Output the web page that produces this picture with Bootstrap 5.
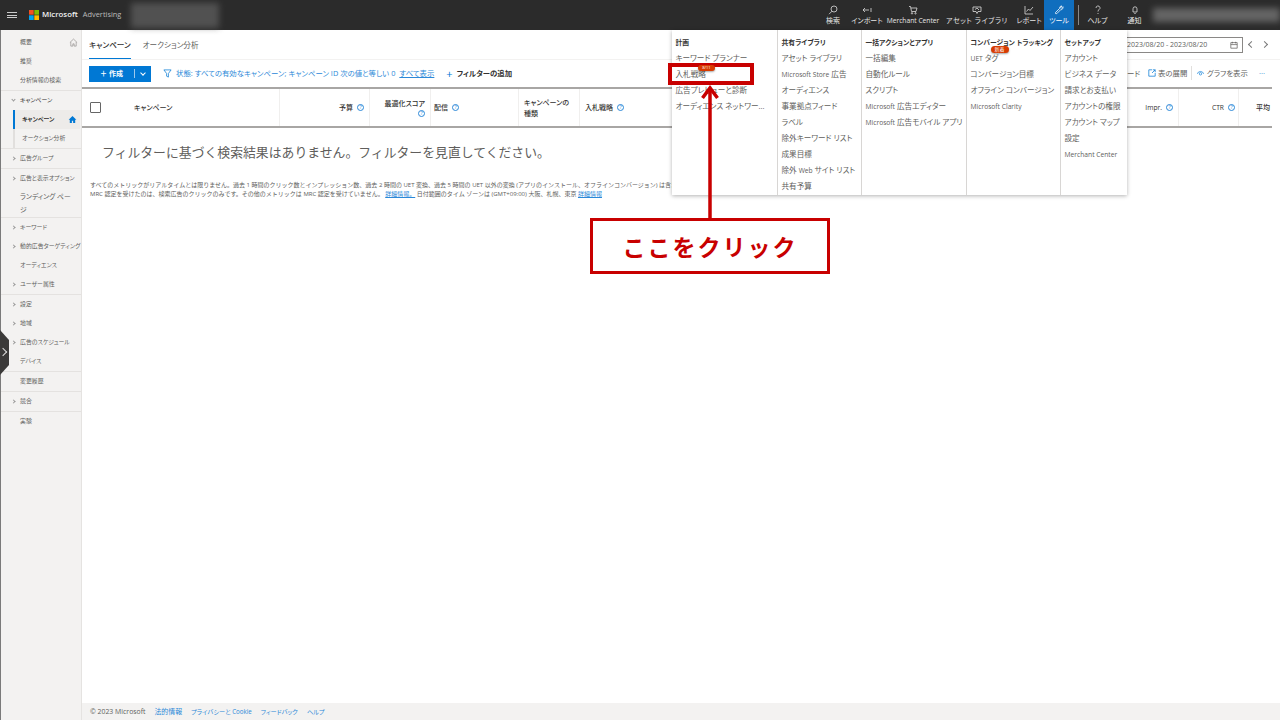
<!DOCTYPE html>
<html lang="ja">
<head>
<meta charset="UTF-8">
<title>Microsoft Advertising</title>
<link href="https://cdn.jsdelivr.net/npm/bootstrap@5.3.0/dist/css/bootstrap.min.css" rel="stylesheet">
<style>
body { font-family: "Open Sans", "Noto Sans CJK JP", sans-serif; font-feature-settings: "palt"; font-size: 7px; color: #605e5c; height: 720px; width: 1280px; overflow: hidden; background: #fff; position: relative; }
a { color: #0078d4; }

.topbar { height: 30px; background: #2b2b2b; color: #e6e6e6; flex: none; }
.burger { width: 10px; margin: 0 12px 0 7px; border-top: 1px solid #ccc; border-bottom: 1px solid #ccc; height: 6px; position: relative; }
.burger::after { content: ""; position: absolute; left: 0; right: 0; top: 1.5px; border-top: 1px solid #ccc; }
.ms-word { font-size: 7.8px; font-weight: 600; color: #f2f2f2; margin-left: 3px; }
.ad-word { font-size: 7.4px; color: #bbb; margin-left: 5px; }
.blur-a { width: 88px; height: 25px; margin-left: 10px; background: #666; filter: blur(3px); opacity: .65; }
.blur-b { width: 127px; height: 14px; background: #8a8a8a; filter: blur(3px); opacity: .6; }
.tnav { height: 30px; display: flex; flex-direction: column; align-items: center; justify-content: flex-end; padding-bottom: 5px; font-size: 7px; white-space: nowrap; color: #e6e6e6; line-height: 9px; }
.tnav svg { margin-bottom: 1px; }
.tnav.now { background: #106ebe; color: #fff; }
.tsep { width: 1px; height: 20px; background: #888; margin: 0 0 0 4px; }

.sidebar { width: 82px; flex: none; background: #f3f2f1; border-left: 1px solid #7a7a7a; border-right: 1px solid #e5e3e1; padding-top: 2.5px; overflow: hidden; }
.sgroup { border-bottom: 1px solid #e4e2e0; }
.sgroup:last-child { border-bottom: 0; }
.sitem { height: 19.05px; line-height: 19px; padding-left: 19px; font-size: 5.9px; white-space: nowrap; position: relative; color: #605e5c; }
.sitem.tall { height: 29px; line-height: 13px; padding-top: 2px; padding-right: 3px; font-size: 6.8px; }
.sitem.par::before { content: ""; position: absolute; left: 11px; top: 8px; width: 3px; height: 3px; border-top: .6px solid #999; border-right: .6px solid #999; transform: rotate(45deg); }
.sitem.open::before { transform: rotate(135deg); top: 7px; }
.sitem.dark { color: #323130; }
.sitem.sub { margin-left: 12px; padding-left: 7px; border-left: 2px solid #e1dfdd; }
.sitem.cur { background: #edebe9; border-left-color: #0078d4; color: #323130; font-weight: 700; margin-right: 1px; }
.sitem svg { position: absolute; right: 3px; top: 5px; }
.flyhandle { position: absolute; left: 0; top: 330px; width: 9px; height: 45px; background: #3b3a39; clip-path: polygon(0 0, 100% 22%, 100% 78%, 0 100%); }
.flyhandle::after { content: ""; position: absolute; left: 0; top: 19px; width: 6px; height: 6px; border-top: 1px solid #ddd; border-right: 1px solid #ddd; transform: rotate(45deg); }

.tabrow { height: 30px; padding-left: 7px; border-bottom: 1px solid #f3f2f1; flex: none; }
.tabitem { font-size: 7.6px; margin-right: 12px; height: 29px; line-height: 30px; white-space: nowrap; }
.tabitem.on { color: #323130; font-weight: 500; border-bottom: 1.5px solid #0078d4; }
.datebox { position: absolute; left: 1100px; top: 37px; width: 143px; height: 16px; border: 1px solid #8a8886; line-height: 14px; padding-left: 26px; font-size: 7px; color: #605e5c; }
.navarrow { position: absolute; top: 42px; width: 5px; height: 5px; border-top: 1px solid #777; border-right: 1px solid #777; }

.toolrow { height: 27px; padding-left: 7px; flex: none; color: #2b88d8; font-size: 7.4px; white-space: nowrap; }
.makebtn { width: 62px; height: 16px; background: #0078d4; color: #fff; font-size: 7px; font-weight: 700; border: 0; border-radius: 0; padding: 0; display: flex; align-items: center; }
.makebtn .mlabel { width: 46px; text-align: center; border-right: 1px solid #9cc9ec; line-height: 9px; }
.makebtn .mcaret { width: 4px; height: 4px; border-right: 1px solid #fff; border-bottom: 1px solid #fff; transform: rotate(45deg); margin: -2px 0 0 6px; }
.rightlinks { position: absolute; left: 1127px; top: 66px; width: 145px; height: 14px; font-size: 7.4px; color: #605e5c; line-height: 14px; display: flex; white-space: nowrap; }

.thead-row { height: 41px; margin-right: 8px; border-top: 2px solid #a8a6a4; border-bottom: 2px solid #a8a6a4; display: flex; flex: none; color: #323130; font-weight: 500; font-size: 7px; line-height: 11px; }
.hcell { height: 100%; border-right: 1px solid #f0efee; flex: none; display: flex; align-items: center; padding: 0 5px; white-space: nowrap; }
.qmark { display: inline-block; width: 7px; height: 7px; border: .6px solid #2b88d8; border-radius: 50%; color: #2b88d8; font-size: 5px; line-height: 5.8px; text-align: center; font-weight: 400; margin-left: 4px; flex: none; }
.tickbox { width: 11px; height: 11px; border: 1px solid #666; border-radius: 1px; background: #fff; }

.nores { font-size: 12.85px; font-feature-settings: normal; color: #605e5c; padding-left: 20px; margin-top: 15px; line-height: 18px; white-space: nowrap; flex: none; }
.finep { font-size: 6px; font-feature-settings: normal; line-height: 9px; padding-left: 8px; margin-top: 20px; white-space: nowrap; color: #605e5c; flex: none; overflow: hidden; }
.finep a { color: #2b88d8; }

.pagefoot { height: 17px; margin-top: auto; background: #f3f2f1; padding-left: 8px; font-size: 6.9px; line-height: 17px; flex: none; white-space: nowrap; }
.pagefoot span { margin-right: 9px; color: #2b88d8; }
.pagefoot span:first-child { color: #605e5c; }
.pagefoot .nar { font-size: 6.2px; }

.toolmenu { position: absolute; left: 672px; top: 30px; width: 455px; height: 165px; background: #fff; box-shadow: 0 1px 4px rgba(0,0,0,.3); display: flex; font-size: 7.6px; color: #605e5c; white-space: nowrap; z-index: 5; }
.mcol { padding: 5px 0 0 3.5px; border-right: 1.5px solid #d8d6d4; flex: none; }
.mcol:last-child { border-right: 0; }
.mhead { height: 15px; line-height: 16px; color: #323130; font-weight: 700; font-size: 6.8px; }
.mline { height: 16px; line-height: 16px; position: relative; }
.lat { font-size: 6.7px; }
.newtag { position: absolute; background: #d83b01; color: #fff; border-radius: 5px; font-size: 5px; line-height: 7px; height: 7px; text-align: center; box-shadow: 0 1px 2px rgba(0,0,0,.35); }
.bidtag { left: 698px; top: 65px; width: 17px; height: 6px; line-height: 6px; font-size: 4px; z-index: 7; }

.redframe { position: absolute; left: 668px; top: 63px; width: 86px; height: 22px; border: 4px solid #c80000; z-index: 6; }
.redarrow { position: absolute; left: 700px; top: 84px; z-index: 7; }
.callout { position: absolute; left: 590px; top: 218px; width: 240px; height: 56px; border: 3.5px solid #c80000; background: #fff; color: #c80000; font-family: "Noto Sans CJK JP", sans-serif; font-feature-settings: normal; font-weight: 700; font-size: 23px; letter-spacing: 2px; display: flex; align-items: center; justify-content: center; z-index: 7; }
</style>
</head>
<body class="d-flex flex-column">

<header class="topbar d-flex align-items-center">
  <div class="burger"></div>
  <svg width="10" height="10" viewBox="0 0 10 10"><rect width="4.7" height="4.7" fill="#f25022"/><rect x="5.3" width="4.7" height="4.7" fill="#7fba00"/><rect y="5.3" width="4.7" height="4.7" fill="#00a4ef"/><rect x="5.3" y="5.3" width="4.7" height="4.7" fill="#ffb900"/></svg>
  <span class="ms-word">Microsoft</span>
  <span class="ad-word">Advertising</span>
  <div class="blur-a"></div>
  <div class="d-flex align-items-center ms-auto">
    <div class="tnav" style="width:30px">
      <svg width="10" height="10" viewBox="0 0 10 10" fill="none" stroke="#ddd" stroke-width=".8"><circle cx="6" cy="4" r="3"/><path d="M4 6.2 1 9.2"/></svg>検索</div>
    <div class="tnav" style="width:38px">
      <svg width="10" height="10" viewBox="0 0 10 10" fill="none" stroke="#ddd" stroke-width=".8"><path d="M1 5h6M3 3 1 5l2 2M9 3v4"/></svg>インポート</div>
    <div class="tnav" style="width:54px">
      <svg width="10" height="10" viewBox="0 0 10 10" fill="none" stroke="#ddd" stroke-width=".8"><path d="M1 1.5h1.5l1 5h4.5l1-3.5H3"/><circle cx="4" cy="8.3" r=".7"/><circle cx="7.5" cy="8.3" r=".7"/></svg><span class="lat">Merchant Center</span></div>
    <div class="tnav" style="width:74px">
      <svg width="10" height="10" viewBox="0 0 10 10" fill="none" stroke="#ddd" stroke-width=".8"><path d="M1 2h8v4.5H6L5 8.5 4 6.500H1z"/><path d="M3 4.500 5 3l2 2"/></svg><span style="letter-spacing:.6px">アセット ライブラリ</span></div>
    <div class="tnav" style="width:30px">
      <svg width="10" height="10" viewBox="0 0 10 10" fill="none" stroke="#ddd" stroke-width=".8"><path d="M1 1v8h8"/><path d="M2.500 6.500 4.500 4l1.500 1.500L9 2"/></svg>レポート</div>
    <div class="tnav now" style="width:30px">
      <svg width="10" height="10" viewBox="0 0 10 10" fill="none" stroke="#fff" stroke-width=".8"><path d="M5.500 3.500 1.500 7.500a1 1 0 0 0 1.200 1.200l4-4a2.200 2.200 0 0 0 2.200-3L7.300 3.300l-.9-.7L7.900 1a2.200 2.200 0 0 0-2.400 2.500z"/></svg>ツール</div>
    <div class="tsep"></div>
    <div class="tnav" style="width:37px">
      <svg width="10" height="10" viewBox="0 0 10 10" fill="none" stroke="#ddd" stroke-width=".8"><path d="M3 3a2 2 0 1 1 3 1.700C5.300 5.100 5 5.500 5 6.500M5 8v1"/></svg>ヘルプ</div>
    <div class="tnav" style="width:37px">
      <svg width="10" height="10" viewBox="0 0 10 10" fill="none" stroke="#ddd" stroke-width=".8"><path d="M3 7V3.800a2 2 0 0 1 4 0V7zM4.300 8.500h1.400"/></svg>通知</div>
    <div class="blur-b"></div>
  </div>
</header>

<div class="d-flex flex-grow-1" style="min-height:0">
  <nav class="sidebar">
    <div class="sgroup">
      <div class="sitem">概要<svg width="9" height="9" viewBox="0 0 10 10" fill="none" stroke="#8a8886" stroke-width=".7"><path d="M1 5 5 1.200 9 5M2 4.500V9h2.300V6.500h1.400V9H8V4.500"/></svg></div>
      <div class="sitem">推奨</div>
      <div class="sitem">分析情報の検索</div>
    </div>
    <div class="sgroup">
      <div class="sitem par open dark">キャンペーン</div>
      <div class="sitem sub cur">キャンペーン<svg width="9" height="9" viewBox="0 0 10 10" fill="#0078d4"><path d="M5 1 .7 5.200H2V9h2.300V6.500h1.400V9H8V5.200h1.300z"/></svg></div>
      <div class="sitem sub">オークション分析</div>
    </div>
    <div class="sgroup"><div class="sitem par">広告グループ</div></div>
    <div class="sgroup">
      <div class="sitem par">広告と表示オプション</div>
      <div class="sitem tall">ランディング ペー<br>ジ</div>
    </div>
    <div class="sgroup">
      <div class="sitem par">キーワード</div>
      <div class="sitem par">動的広告ターゲティング</div>
      <div class="sitem">オーディエンス</div>
      <div class="sitem par">ユーザー属性</div>
    </div>
    <div class="sgroup">
      <div class="sitem par">設定</div>
      <div class="sitem par">地域</div>
      <div class="sitem par">広告のスケジュール</div>
      <div class="sitem">デバイス</div>
    </div>
    <div class="sgroup"><div class="sitem">変更履歴</div></div>
    <div class="sgroup"><div class="sitem par">競合</div></div>
    <div class="sgroup"><div class="sitem">実験</div></div>
  </nav>

  <main class="d-flex flex-column flex-grow-1" style="min-width:0">
    <div class="tabrow d-flex">
      <div class="tabitem on">キャンペーン</div>
      <div class="tabitem">オークション分析</div>
    </div>
    <div class="toolrow d-flex align-items-center">
      <button class="makebtn" type="button"><span class="mlabel">＋ 作成</span><span class="mcaret"></span></button>
      <svg class="me-1" style="margin-left:12px" width="9" height="9" viewBox="0 0 10 10" fill="none" stroke="#0078d4" stroke-width=".8"><path d="M1 1h8L6 5v4L4 8V5z"/></svg>
      <span>状態: すべての有効なキャンペーン; キャンペーン ID 次の値と等しい 0</span>
      <u class="ms-1">すべて表示</u>
      <span style="color:#0078d4;font-size:11px;line-height:10px;margin-left:12px">+</span>
      <strong class="ms-1" style="color:#323130">フィルターの追加</strong>
    </div>
    <div class="thead-row">
      <div class="hcell" style="width:198px;padding-left:8px"><span class="tickbox"></span><span style="margin-left:33px">キャンペーン</span></div>
      <div class="hcell justify-content-end" style="width:90px">予算<span class="qmark">?</span></div>
      <div class="hcell flex-column justify-content-center align-items-end" style="width:61px">最適化スコア<span class="qmark" style="margin:1px 0 0 0">?</span></div>
      <div class="hcell" style="width:88px;padding-left:3px">配信<span class="qmark">?</span></div>
      <div class="hcell" style="width:61px;white-space:normal">キャンペーンの種類</div>
      <div class="hcell" style="flex:1 1 0">入札戦略<span class="qmark">?</span></div>
      <div class="hcell justify-content-end" style="width:60px"><span class="lat">Impr.</span><span class="qmark">?</span></div>
      <div class="hcell justify-content-end" style="width:60px;padding-right:3px"><span class="lat">CTR</span><span class="qmark">?</span></div>
      <div class="hcell" style="width:33px;border:0;padding-left:17px">平均</div>
    </div>
    <div class="nores">フィルターに基づく検索結果はありません。フィルターを見直してください。</div>
    <div class="finep">
      <div>すべてのメトリックがリアルタイムとは限りません。過去 1 時間のクリック数とインプレッション数、過去 2 時間の UET 変換、過去 5 時間の UET 以外の変換 (アプリのインストール、オフラインコンバージョン) は含まれない場合があります。</div>
      <div>MRC 認定を受けたのは、検索広告のクリックのみです。その他のメトリックは MRC 認定を受けていません。 <a href="#">詳細情報。</a> 日付範囲のタイム ゾーンは (GMT+09:00) 大阪、札幌、東京 <a href="#">詳細情報</a></div>
    </div>
    <footer class="pagefoot">
      <span>© 2023 Microsoft</span><span>法的情報</span><span class="nar">プライバシーと Cookie</span><span class="nar">フィードバック</span><span class="nar">ヘルプ</span>
    </footer>
  </main>
</div>

<div class="datebox">2023/08/20 - 2023/08/20
  <svg style="position:absolute;right:4px;top:3px" width="8" height="8" viewBox="0 0 10 10" fill="none" stroke="#605e5c" stroke-width=".9"><path d="M1 2h8v7H1zM1 4.500h8M3 1v2M7 1v2"/></svg>
</div>
<div class="navarrow" style="left:1249px;transform:rotate(-135deg)"></div>
<div class="navarrow" style="left:1262px;transform:rotate(45deg)"></div>

<div class="rightlinks">
  <span style="width:21px">ード</span>
  <svg style="margin:3px 2px 0 0" width="8" height="8" viewBox="0 0 10 10" fill="none" stroke="#0078d4" stroke-width=".9"><path d="M5 1H1v8h8V5M6 1h3v3M9 1 5 5"/></svg>
  <span style="width:33px">表の展開</span>
  <span style="width:1px;height:14px;background:#e1dfdd;margin-right:4px"></span>
  <svg style="margin:3px 2px 0 0" width="9" height="8" viewBox="0 0 10 10" fill="none" stroke="#0078d4" stroke-width=".8"><path d="M1 6a4.200 4.200 0 0 1 8 0"/><circle cx="5" cy="6" r="1.500"/></svg>
  <span style="width:52px">グラフを表示</span>
  <span style="color:#0078d4">···</span>
</div>

<div class="flyhandle"></div>

<div class="toolmenu">
  <div class="mcol" style="width:106px">
    <div class="mhead">計画</div>
    <div class="mline">キーワード プランナー</div>
    <div class="mline">入札戦略</div>
    <div class="mline">広告プレビューと診断</div>
    <div class="mline">オーディエンス ネットワー...</div>
  </div>
  <div class="mcol" style="width:84px">
    <div class="mhead">共有ライブラリ</div>
    <div class="mline">アセット ライブラリ</div>
    <div class="mline"><span class="lat">Microsoft Store</span> 広告</div>
    <div class="mline">オーディエンス</div>
    <div class="mline">事業拠点フィード</div>
    <div class="mline">ラベル</div>
    <div class="mline">除外キーワード リスト</div>
    <div class="mline">成果目標</div>
    <div class="mline">除外 <span class="lat">Web</span> サイト リスト</div>
    <div class="mline">共有予算</div>
  </div>
  <div class="mcol" style="width:105px">
    <div class="mhead">一括アクションとアプリ</div>
    <div class="mline">一括編集</div>
    <div class="mline">自動化ルール</div>
    <div class="mline">スクリプト</div>
    <div class="mline"><span class="lat">Microsoft</span> 広告エディター</div>
    <div class="mline"><span class="lat">Microsoft</span> 広告モバイル アプリ</div>
  </div>
  <div class="mcol" style="width:94px">
    <div class="mhead">コンバージョン トラッキング</div>
    <div class="mline"><span class="lat">UET</span> タグ<span class="newtag" style="left:20px;top:-4px;width:18px">新着</span></div>
    <div class="mline">コンバージョン目標</div>
    <div class="mline">オフライン コンバージョン</div>
    <div class="mline"><span class="lat">Microsoft Clarity</span></div>
  </div>
  <div class="mcol" style="width:66px">
    <div class="mhead">セットアップ</div>
    <div class="mline">アカウント</div>
    <div class="mline">ビジネス データ</div>
    <div class="mline">請求とお支払い</div>
    <div class="mline">アカウントの権限</div>
    <div class="mline">アカウント マップ</div>
    <div class="mline">設定</div>
    <div class="mline"><span class="lat">Merchant Center</span></div>
  </div>
</div>

<div class="redframe"></div>
<span class="newtag bidtag">8/11</span>
<svg class="redarrow" width="20" height="136" viewBox="0 0 20 136" fill="none" stroke="#c80000"><path d="M10 4v132" stroke-width="3.500"/><path d="M2.500 14 10 4l7.500 10" stroke-width="3.500"/></svg>
<div class="callout">ここをクリック</div>

<script src="https://cdn.jsdelivr.net/npm/bootstrap@5.3.0/dist/js/bootstrap.bundle.min.js"></script>
</body>
</html>
